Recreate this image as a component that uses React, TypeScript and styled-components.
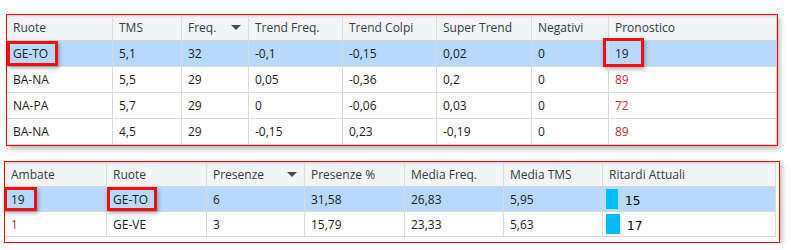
import styled, { createGlobalStyle } from "styled-components";

const GlobalStyle = createGlobalStyle`
  html, body {
    margin: 0;
    padding: 0;
    background: #ffffff;
  }
  body {
    font-family: "Open Sans", "Noto Sans", sans-serif;
    font-size: 12px;
    color: #1b1b1b;
  }
`;

interface Column {
  title: string;
  width: number;
  sorted?: boolean;
}

interface Cell {
  text: string;
  red?: boolean;
  mark?: { left: number; width: number; top?: number; bottom?: number };
  bar?: number;
}

const topColumns: Column[] = [
  { title: "Ruote", width: 106 },
  { title: "TMS", width: 69 },
  { title: "Freq.", width: 67, sorted: true },
  { title: "Trend Freq.", width: 94 },
  { title: "Trend Colpi", width: 94 },
  { title: "Super Trend", width: 95 },
  { title: "Negativi", width: 77 },
  { title: "Pronostico", width: 168 },
];

const topRows: Cell[][] = [
  [
    { text: "GE-TO", mark: { left: 0, width: 51 } },
    { text: "5,1" },
    { text: "32" },
    { text: "-0,1" },
    { text: "-0,15" },
    { text: "0,02" },
    { text: "0" },
    { text: "19", mark: { left: -6, width: 41, top: -3, bottom: -1 } },
  ],
  [
    { text: "BA-NA" },
    { text: "5,5" },
    { text: "29" },
    { text: "0,05" },
    { text: "-0,36" },
    { text: "0,2" },
    { text: "0" },
    { text: "89", red: true },
  ],
  [
    { text: "NA-PA" },
    { text: "5,7" },
    { text: "29" },
    { text: "0" },
    { text: "-0,06" },
    { text: "0,03" },
    { text: "0" },
    { text: "72", red: true },
  ],
  [
    { text: "BA-NA" },
    { text: "4,5" },
    { text: "29" },
    { text: "-0,15" },
    { text: "0,23" },
    { text: "-0,19" },
    { text: "0" },
    { text: "89", red: true },
  ],
];

const bottomColumns: Column[] = [
  { title: "Ambate", width: 102 },
  { title: "Ruote", width: 100 },
  { title: "Presenze", width: 98, sorted: true },
  { title: "Presenze %", width: 100 },
  { title: "Media Freq.", width: 99 },
  { title: "Media TMS", width: 99 },
  { title: "Ritardi Attuali", width: 173 },
];

const bottomRows: Cell[][] = [
  [
    { text: "19", mark: { left: -1, width: 33 } },
    { text: "GE-TO", mark: { left: 0, width: 50 } },
    { text: "6" },
    { text: "31,58" },
    { text: "26,83" },
    { text: "5,95" },
    { text: "15", bar: 12 },
  ],
  [
    { text: "1", red: true },
    { text: "GE-VE" },
    { text: "3" },
    { text: "15,79" },
    { text: "23,33" },
    { text: "5,63" },
    { text: "17", bar: 14 },
  ],
];

export default function App() {
  return (
    <Page>
      <GlobalStyle />
      <Panel $left={6} $width={772}>
        <Grid columns={topColumns} rows={topRows} selected={0} rowHeight={26} />
      </Panel>
      <Panel $left={4} $width={776} $bottomGap={5} $rightGap={3}>
        <Grid
          columns={bottomColumns}
          rows={bottomRows}
          selected={0}
          rowHeight={25}
          headerHeight={25}
        />
      </Panel>
    </Page>
  );
}

function Grid({
  columns,
  rows,
  selected,
  rowHeight,
  headerHeight = 26,
}: {
  columns: Column[];
  rows: Cell[][];
  selected: number;
  rowHeight: number;
  headerHeight?: number;
}) {
  const template = columns.map((c) => `${c.width}px`).join(" ");
  return (
    <Table>
      <HeaderRow $cols={template} $height={headerHeight}>
        {columns.map((c) => (
          <HeaderCell key={c.title}>
            <span>{c.title}</span>
            {c.sorted && <SortArrow />}
          </HeaderCell>
        ))}
      </HeaderRow>
      {rows.map((row, i) => (
        <DataRow
          key={i}
          $cols={template}
          $height={rowHeight}
          $selected={i === selected}
        >
          {row.map((cell, j) => (
            <DataCell key={j} $red={cell.red}>
              {cell.bar !== undefined && <Bar style={{ width: cell.bar }} />}
              <CellText $bar={cell.bar !== undefined}>{cell.text}</CellText>
              {cell.mark && (
                <Mark
                  style={{
                    left: cell.mark.left,
                    width: cell.mark.width,
                    top: cell.mark.top ?? 0,
                    bottom: cell.mark.bottom ?? 0,
                  }}
                />
              )}
            </DataCell>
          ))}
        </DataRow>
      ))}
    </Table>
  );
}

const Page = styled.div`
  padding-top: 14px;
  display: flex;
  flex-direction: column;
  gap: 15px;
`;

const Panel = styled.div<{
  $left: number;
  $width: number;
  $bottomGap?: number;
  $rightGap?: number;
}>`
  margin-left: ${(p) => p.$left}px;
  width: ${(p) => p.$width}px;
  box-sizing: border-box;
  border: 1px solid #ff0000;
  background: #ffffff;
  padding-bottom: ${(p) => p.$bottomGap ?? 0}px;
  padding-right: ${(p) => p.$rightGap ?? 0}px;
  box-shadow: 2px 3px 5px rgba(0, 0, 0, 0.28);
`;

const Table = styled.div`
  display: flex;
  flex-direction: column;
`;

const HeaderRow = styled.div<{ $cols: string; $height: number }>`
  display: grid;
  grid-template-columns: ${(p) => p.$cols};
  height: ${(p) => p.$height}px;
  background: linear-gradient(#cfd0d2 0, #eceef0 2px, #f3f4f6 5px);
  border-bottom: 1px solid #d6d6d6;
  box-sizing: border-box;
`;

const HeaderCell = styled.div`
  display: flex;
  align-items: center;
  justify-content: space-between;
  padding: 0 5px 0 6px;
  border-right: 1px solid #dcdcdc;
  color: #333a45;
  white-space: nowrap;
  overflow: hidden;
`;

const SortArrow = styled.span`
  width: 0;
  height: 0;
  border-left: 5px solid transparent;
  border-right: 5px solid transparent;
  border-top: 5px solid #4a4a4a;
  margin-right: 2px;
`;

const DataRow = styled.div<{ $cols: string; $height: number; $selected: boolean }>`
  display: grid;
  grid-template-columns: ${(p) => p.$cols};
  height: ${(p) => p.$height}px;
  box-sizing: border-box;
  border-bottom: 1px solid #d9d9d9;
  background: ${(p) => (p.$selected ? "#b7d9fb" : "#ffffff")};
`;

const DataCell = styled.div<{ $red?: boolean }>`
  position: relative;
  display: flex;
  align-items: center;
  padding: 0 5px 0 6px;
  border-right: 1px solid #dadada;
  color: ${(p) => (p.$red ? "#c0302e" : "#1b1b1b")};
  white-space: nowrap;
`;

const CellText = styled.span<{ $bar: boolean }>`
  font-family: ${(p) =>
    p.$bar ? `"DejaVu Sans", sans-serif` : `"Open Sans", "Noto Sans", sans-serif`};
  font-size: 12px;
  margin-left: ${(p) => (p.$bar ? "7px" : "0")};
  margin-top: ${(p) => (p.$bar ? "3px" : "0")};
  color: ${(p) => (p.$bar ? "#000000" : "inherit")};
`;

const Bar = styled.span`
  height: 20px;
  background: #00bcf8;
  margin-left: -3px;
`;

const Mark = styled.span`
  position: absolute;
  box-sizing: border-box;
  border: 3px solid #ee1111;
  box-shadow: 1px 2px 4px rgba(0, 0, 0, 0.35);
  pointer-events: none;
`;
